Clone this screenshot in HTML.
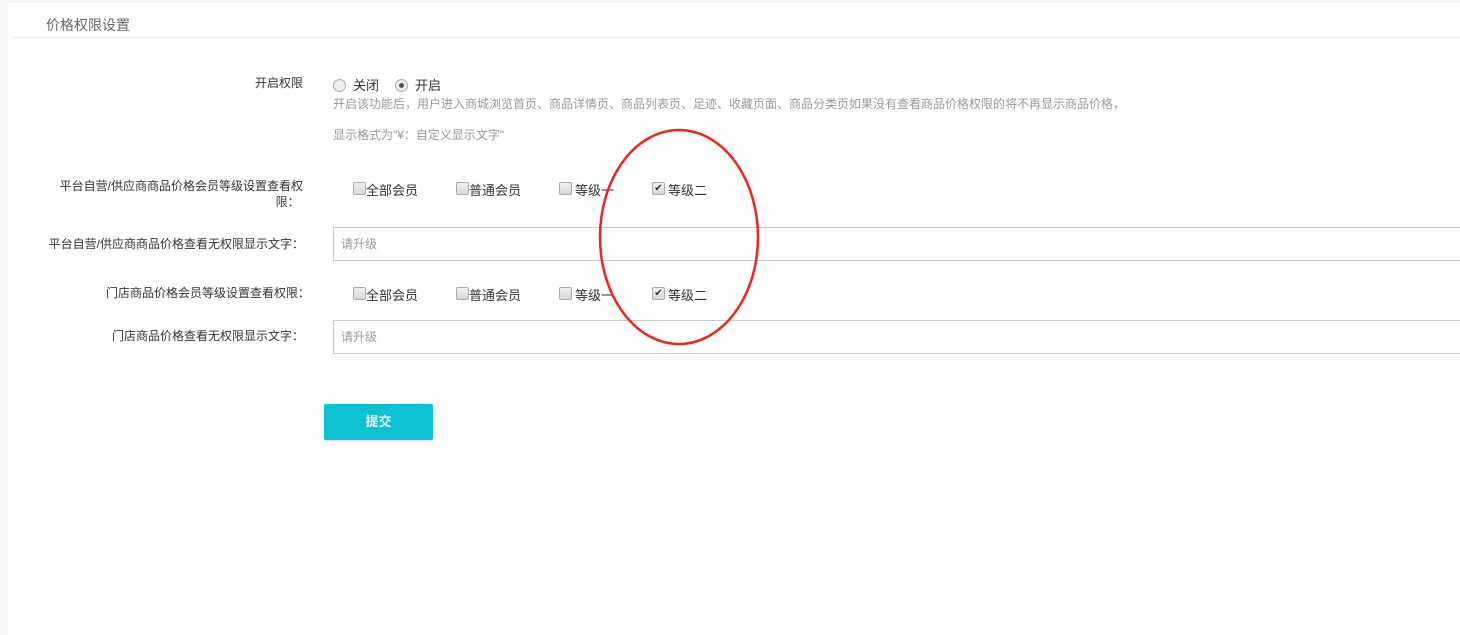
<!DOCTYPE html>
<html><head><meta charset="utf-8"><style>
body{margin:0;width:1460px;height:635px;background:#f5f5f5;font-family:"Liberation Sans","Noto Sans CJK SC",sans-serif;position:relative;overflow:hidden}
.p{position:absolute;left:8px;top:3px;right:0;bottom:0;background:#fff}
.a{position:absolute;white-space:nowrap}
.l{font-size:12px;color:#333;text-align:right}
.cb{position:absolute;width:11px;height:11px;border:1px solid #aaa;border-radius:2px;background:linear-gradient(#f0f0f0,#d8d8d8)}
.t{position:absolute;font-size:13px;color:#333}
.in{position:absolute;left:333px;right:-2px;border:1px solid #ccc;font-size:12px;color:#999;line-height:32px;padding-left:7px;box-sizing:border-box;height:34px}
.g{font-size:12px;color:#999}
</style></head><body>
<div class="p"></div>
<div class="a" style="left:46px;top:15px;font-size:14px;color:#666">价格权限设置</div>
<div class="a" style="left:12px;top:37px;right:0;height:1px;background:#eee"></div>

<div class="a l" style="right:1157px;top:74px">开启权限</div>
<div class="a" style="left:333px;top:79px;width:11px;height:11px;border:1px solid #aaa;border-radius:50%;background:#eee"></div>
<div class="t" style="left:353px;top:75px">关闭</div>
<div class="a" style="left:395px;top:79px;width:11px;height:11px;border:1px solid #aaa;border-radius:50%;background:#eee"><div style="position:absolute;left:3px;top:3px;width:5px;height:5px;border-radius:50%;background:#555"></div></div>
<div class="t" style="left:415px;top:75px">开启</div>
<div class="a g" style="left:333px;top:95px">开启该功能后，用户进入商城浏览首页、商品详情页、商品列表页、足迹、收藏页面、商品分类页如果没有查看商品价格权限的将不再显示商品价格，</div>
<div class="a g" style="left:333px;top:126px">显示格式为"¥：自定义显示文字"</div>

<div class="a l" style="right:1157px;top:178px;line-height:16px">平台自营/供应商商品价格会员等级设置查看权<br>限：&nbsp;</div>
<div class="cb" style="left:353px;top:182px"></div><div class="t" style="left:366px;top:180px">全部会员</div>
<div class="cb" style="left:456px;top:182px"></div><div class="t" style="left:469px;top:180px">普通会员</div>
<div class="cb" style="left:559px;top:182px"></div><div class="t" style="left:575px;top:180px">等级一</div>
<div class="cb" style="left:652px;top:182px;font-size:10px;line-height:11px;text-align:center;color:#333">✔</div><div class="t" style="left:668px;top:180px">等级二</div>

<div class="a l" style="right:1156px;top:235px">平台自营/供应商商品价格查看无权限显示文字：</div>
<div class="in" style="top:227px">请升级</div>

<div class="a l" style="right:1150px;top:284px">门店商品价格会员等级设置查看权限：</div>
<div class="cb" style="left:353px;top:287px"></div><div class="t" style="left:366px;top:285px">全部会员</div>
<div class="cb" style="left:456px;top:287px"></div><div class="t" style="left:469px;top:285px">普通会员</div>
<div class="cb" style="left:559px;top:287px"></div><div class="t" style="left:575px;top:285px">等级一</div>
<div class="cb" style="left:652px;top:287px;font-size:10px;line-height:11px;text-align:center;color:#333">✔</div><div class="t" style="left:668px;top:285px">等级二</div>

<div class="a l" style="right:1156px;top:327px">门店商品价格查看无权限显示文字：</div>
<div class="in" style="top:320px">请升级</div>

<div class="a" style="left:324px;top:404px;width:109px;height:36px;background:#0cc2d3;border-radius:2px;color:#fff;font-size:13px;font-weight:bold;text-align:center;line-height:36px;box-shadow:0 1px 2px rgba(150,80,200,.3)">提交</div>

<svg class="a" style="left:0;top:0" width="1460" height="635"><ellipse cx="679" cy="237" rx="79" ry="107" fill="none" stroke="#f2231b" stroke-width="2.5"/></svg>
</body></html>
